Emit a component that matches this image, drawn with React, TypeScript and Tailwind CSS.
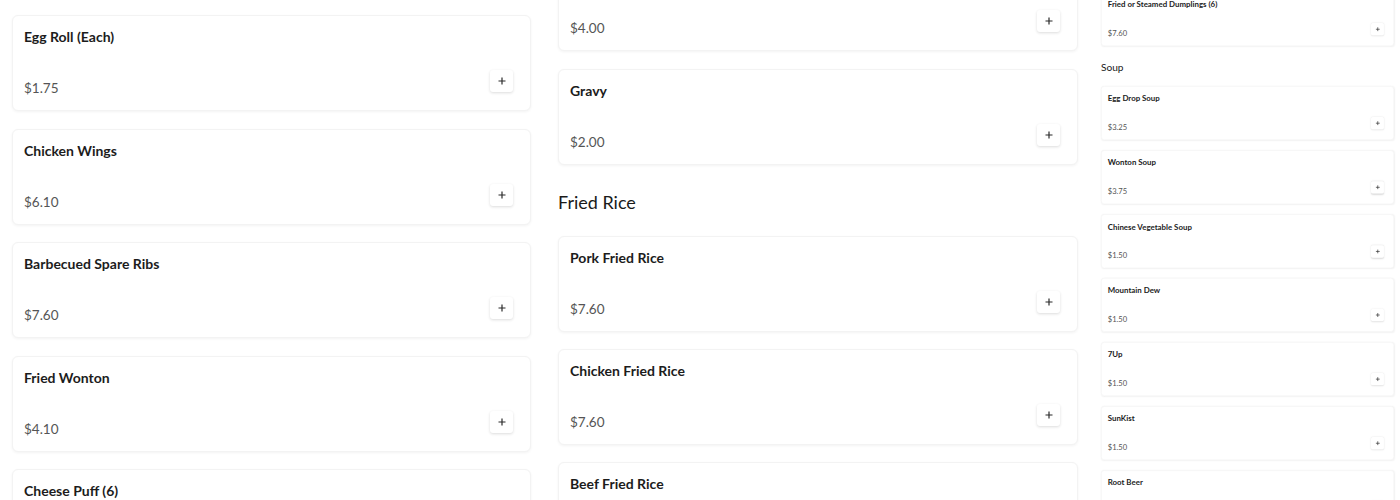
type Item = { name: string; price: string };

const leftItems: Item[] = [
  { name: "Egg Roll (Each)", price: "$1.75" },
  { name: "Chicken Wings", price: "$6.10" },
  { name: "Barbecued Spare Ribs", price: "$7.60" },
  { name: "Fried Wonton", price: "$4.10" },
  { name: "Cheese Puff (6)", price: "$5.10" },
];

const middleTop: Item[] = [
  { name: "Sweet and Sour Sauce", price: "$4.00" },
  { name: "Gravy", price: "$2.00" },
];

const friedRice: Item[] = [
  { name: "Pork Fried Rice", price: "$7.60" },
  { name: "Chicken Fried Rice", price: "$7.60" },
  { name: "Beef Fried Rice", price: "$7.60" },
];

const soups: Item[] = [
  { name: "Egg Drop Soup", price: "$3.25" },
  { name: "Wonton Soup", price: "$3.75" },
  { name: "Chinese Vegetable Soup", price: "$1.50" },
  { name: "Mountain Dew", price: "$1.50" },
  { name: "7Up", price: "$1.50" },
  { name: "SunKist", price: "$1.50" },
  { name: "Root Beer", price: "$1.50" },
];

function PlusIcon() {
  return (
    <svg width="8" height="8" viewBox="0 0 8 8" fill="none">
      <path d="M4 0.5v7M0.5 4h7" stroke="#2b2b2b" strokeWidth="1.2" />
    </svg>
  );
}

function MenuCard({ item }: { item: Item }) {
  return (
    <div className="flex h-[96px] shrink-0 flex-col justify-between rounded-md border border-[#f3f3f3] bg-white pb-[12px] pl-[11px] pr-[17px] pt-[11px] shadow-[0_1px_3px_rgba(0,0,0,0.05)]">
      <h3 className="text-[14px] font-bold leading-5 text-[#1c1c1c]">{item.name}</h3>
      <div className="flex items-end justify-between">
        <span className="text-[13.5px] leading-5 text-[#555555]">{item.price}</span>
        <button className="mb-[6px] flex h-[22px] w-[23px] items-center justify-center rounded-[3px] bg-white shadow-[0_1px_3px_rgba(0,0,0,0.14)]">
          <PlusIcon />
        </button>
      </div>
    </div>
  );
}

function SectionTitle({ children }: { children: string }) {
  return <h2 className="mb-[22px] mt-[25px] text-[18px] leading-6 text-[#1a1a1a]">{children}</h2>;
}

export default function App() {
  return (
    <div
      className="flex h-[500px] overflow-hidden bg-white pl-3"
      style={{ fontFamily: "Lato, 'Open Sans', sans-serif" }}
    >
      <div className="flex w-[519px] shrink-0 flex-col gap-[17.5px] pt-[15px]">
        {leftItems.map((it) => (
          <MenuCard key={it.name} item={it} />
        ))}
      </div>

      <div className="ml-[27px] flex w-[520px] shrink-0 flex-col">
        <div className="mt-[-45px] flex flex-col gap-[18px]">
          {middleTop.map((it) => (
            <MenuCard key={it.name} item={it} />
          ))}
        </div>
        <SectionTitle>Fried Rice</SectionTitle>
        <div className="flex flex-col gap-[17px]">
          {friedRice.map((it) => (
            <MenuCard key={it.name} item={it} />
          ))}
        </div>
      </div>

      <div className="ml-[23px] w-[293px] shrink-0">
        <div className="flex w-[521px] origin-top-left scale-[0.5625] flex-col">
          <div className="mt-[-14px] flex flex-col">
            <MenuCard item={{ name: "Fried or Steamed Dumplings (6)", price: "$7.60" }} />
          </div>
          <SectionTitle>Soup</SectionTitle>
          <div className="flex flex-col gap-[17.8px]">
            {soups.map((it) => (
              <MenuCard key={it.name} item={it} />
            ))}
          </div>
        </div>
      </div>
    </div>
  );
}
